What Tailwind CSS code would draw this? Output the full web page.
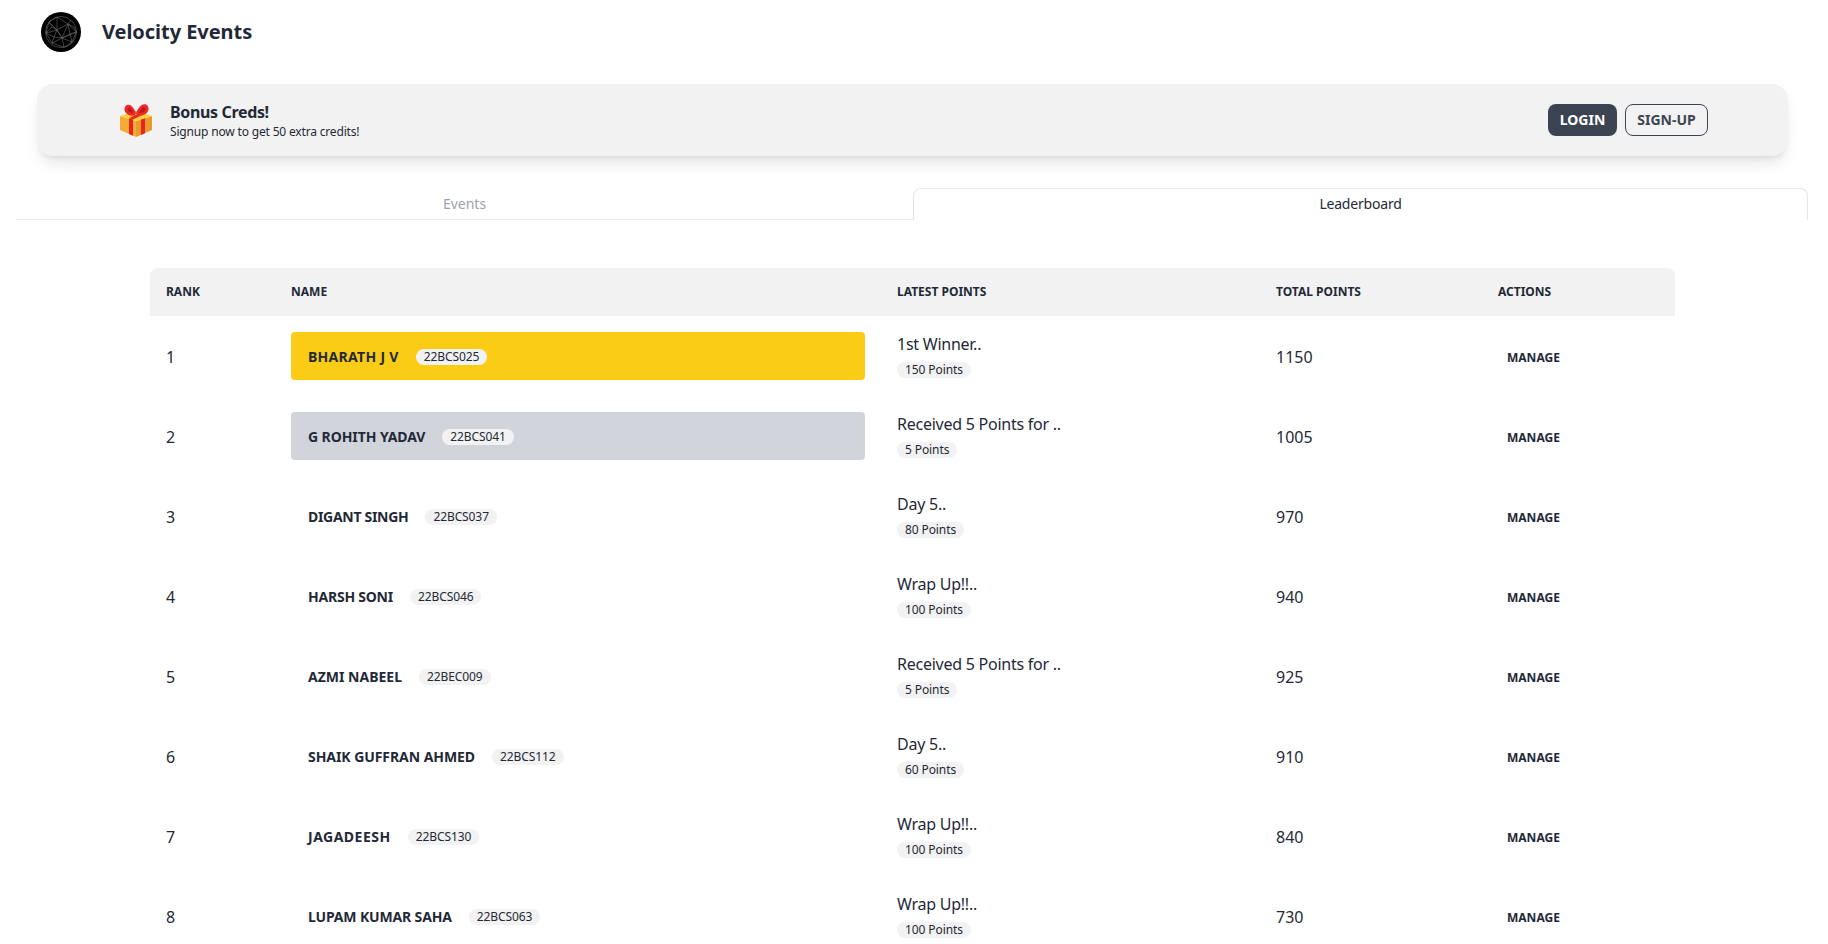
<!DOCTYPE html>
<html>
<head>
  <meta charset="utf-8">
  <title>Velocity Events</title>
  <script src="https://cdn.jsdelivr.net/npm/@tailwindcss/browser@4"></script>
</head>
<body class="bg-white text-[#1f2937] font-['Noto_Sans',sans-serif] h-screen overflow-hidden">

  <!-- Navbar -->
  <div class="flex items-center h-16 pl-[41px]">
    <svg width="40" height="40" viewBox="0 0 40 40" class="shrink-0">
      <circle cx="20" cy="20" r="20" fill="#000"/>
      <g fill="none" stroke="#777" stroke-width="0.55">
        <circle cx="20" cy="20" r="15.5"/>
        <path d="M16 5 L16 18 L27 12 L30 8 M16 5 L27 12 M16 18 L8 10 L16 5 M8 10 L5 21 L16 18 M8 10 L11 15 L16 18 M5 21 L11 15 M16 18 L21 26 L27 12 M27 12 L35.4 20 L21 26 M27 12 L33 15 L35.4 20 M5 21 L11 31 L21 26 L16 18 M5 21 L13 25 L16 18 M13 25 L11 31 M13 25 L21 26 M11 31 L23 35.3 L21 26 M23 35.3 L31 30 L21 26 M31 30 L35.4 20 M21 26 L29 22 L35.4 20 M29 22 L31 30 M29 22 L27 12"/>
      </g>
    </svg>
    <div class="ml-[21px] text-xl font-bold tracking-[-0.05px]">Velocity Events</div>
  </div>

  <!-- Banner -->
  <div class="ml-[37px] mr-10 mt-5 h-[72px] bg-[#f2f2f2] rounded-2xl shadow-lg flex items-center justify-between px-20">
    <div class="flex items-center">
      <svg width="36" height="36" viewBox="0 0 36 36" class="ml-[1px]">
        <path d="M2 14 L18 19 L18 35 L2 28 Z" fill="#f5ab35"/>
        <path d="M18 19 L34 14 L34 28 L18 35 Z" fill="#e99a2c"/>
        <path d="M2 14 L18 9 L34 14 L18 19 Z" fill="#fcd13a"/>
        <path d="M11 16.2 L15 17.5 L15 33.7 L11 32 Z M23 17.4 L27 16.2 L27 31.2 L23 33 Z" fill="#e8261f"/>
        <path d="M11 16.2 L21 11.4 L25 12.6 L15 17.5 Z" fill="#e8261f"/>
        <path d="M17 13.5 C12.5 14.5 7.5 12.5 6.5 8 C6 3.5 10 1.5 13 3.5 C15.5 5.5 17 8.5 18 11 Z" fill="#f0282a"/>
        <path d="M19 13.5 C23.5 14.5 29.5 12.5 30.5 7.5 C31 3 27 1 24 2.8 C21 5 19 8.5 18 11 Z" fill="#f0282a"/>
        <path d="M9.5 8 C9.5 6 11 5 12.5 6 C14 7.5 15 9 15.5 11 C12.5 11 10 10 9.5 8 Z M27.5 7.5 C27.5 5.5 26 4.6 24.6 5.6 C23 7 22 9 21 11 C24.5 11 27 9.6 27.5 7.5 Z" fill="#b81c1c"/>
      </svg>
      <div class="ml-4 mt-[2px]">
        <div class="font-bold text-base leading-5 tracking-[-0.35px]">Bonus Creds!</div>
        <div class="mt-[2px] text-xs leading-4 tracking-[-0.17px]">Signup now to get 50 extra credits!</div>
      </div>
    </div>
    <div class="flex items-center gap-2">
      <button class="h-8 w-[69px] rounded-lg bg-[#3d4451] text-white text-sm font-bold">LOGIN</button>
      <button class="h-8 w-[83px] rounded-lg border border-[#3d4451] text-[#3d4451] text-sm font-bold">SIGN-UP</button>
    </div>
  </div>

  <!-- Tabs -->
  <div class="flex mt-8 ml-4 mr-5 h-8 text-sm">
    <div class="w-[897px] border-b border-[#e5e7eb] flex items-center justify-center text-[#9ca3af]">Events</div>
    <div class="flex-1 border border-b-0 border-[#e5e7eb] rounded-t-lg flex items-center justify-center pb-[1px] tracking-[-0.2px]">Leaderboard</div>
  </div>

  <!-- Leaderboard -->
  <div class="mt-12 ml-[150px] w-[1525px]">
    <table class="w-full table-fixed text-left">
      <colgroup>
        <col class="w-[125px]"><col class="w-[606px]"><col class="w-[379px]"><col class="w-[222px]"><col class="w-[193px]">
      </colgroup>
      <thead class="bg-[#f2f2f2] text-xs font-bold">
        <tr class="h-12">
          <th class="px-4 rounded-tl-lg">RANK</th>
          <th class="px-4">NAME</th>
          <th class="px-4">LATEST POINTS</th>
          <th class="px-4">TOTAL POINTS</th>
          <th class="px-4 rounded-tr-lg">ACTIONS</th>
        </tr>
      </thead>
      <tbody id="rows"></tbody>
    </table>
  </div>

<script>
  const participantes = [
    ['BHARATH J V', '22BCS025', '1st Winner..', '150 Points', '1150', 'bg-[#facc15] rounded', 'tracking-[0.3px]'],
    ['G ROHITH YADAV', '22BCS041', 'Received 5 Points for ..', '5 Points', '1005', 'bg-[#d1d5db] rounded', 'tracking-[-0.08px]'],
    ['DIGANT SINGH', '22BCS037', 'Day 5..', '80 Points', '970', '', 'tracking-[-0.3px]'],
    ['HARSH SONI', '22BCS046', 'Wrap Up!!..', '100 Points', '940', '', 'tracking-[-0.23px]'],
    ['AZMI NABEEL', '22BEC009', 'Received 5 Points for ..', '5 Points', '925', '', ''],
    ['SHAIK GUFFRAN AHMED', '22BCS112', 'Day 5..', '60 Points', '910', '', 'tracking-[-0.06px]'],
    ['JAGADEESH', '22BCS130', 'Wrap Up!!..', '100 Points', '840', '', 'tracking-[0.5px]'],
    ['LUPAM KUMAR SAHA', '22BCS063', 'Wrap Up!!..', '100 Points', '730', '', 'tracking-[-0.15px]']
  ];

  const rows = document.getElementById('rows');
  participantes.forEach((p, i) => {
    const tr = document.createElement('tr');
    tr.className = 'h-20';
    tr.innerHTML = `
      <td class="px-4 pt-[1px]">${i + 1}</td>
      <td class="px-4">
        <div class="h-12 flex items-center pl-[17px] ${p[5]}">
          <span class="text-sm font-bold pt-[1px] ${p[6]}">${p[0]}</span>
          <span class="ml-[17px] h-4 px-2 mt-[1px] flex items-center rounded-full bg-[#f2f2f2] text-xs tracking-[-0.1px]">${p[1]}</span>
        </div>
      </td>
      <td class="px-4">
        <div class="h-12 flex flex-col items-start">
          <div class="leading-6 tracking-[-0.25px]">${p[2]}</div>
          <span class="mt-[6px] h-4 px-2 flex items-center rounded-full bg-[#f2f2f2] text-xs tracking-[-0.1px]">${p[3]}</span>
        </div>
      </td>
      <td class="px-4 pt-[1px]">${p[4]}</td>
      <td class="px-4 pt-1"><div class="ml-[9px] text-xs leading-4 font-bold">MANAGE</div></td>
    `;
    rows.appendChild(tr);
  });
</script>
</body>
</html>
